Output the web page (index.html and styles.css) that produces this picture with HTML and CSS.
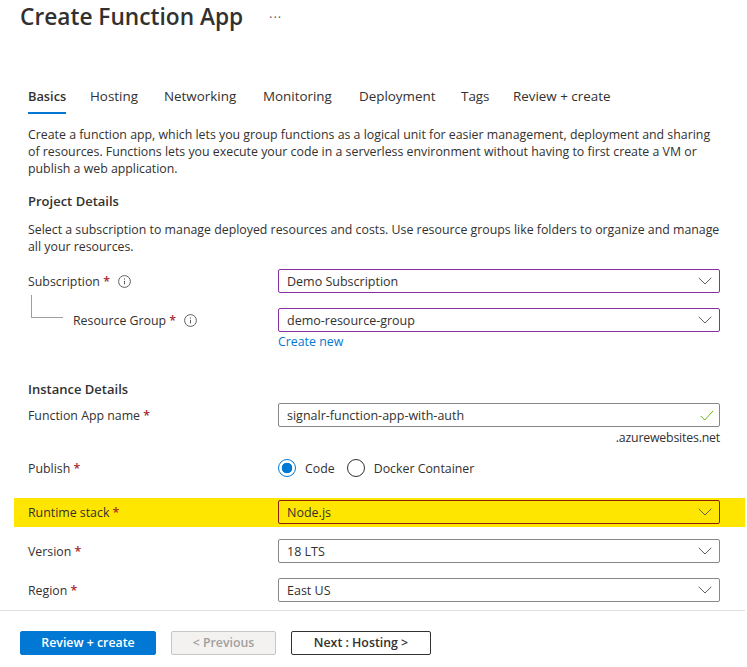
FILE: index.html
```html
<!DOCTYPE html>
<html lang="en">
<head>
    <meta charset="UTF-8">
    <title>Create Function App</title>
    <link rel="stylesheet" href="styles.css">
</head>
<body>
    <header class="page-header">
        <h1>Create Function App</h1>
        <span class="more-dots">&middot;&middot;&middot;</span>
    </header>

    <main class="content">
        <nav class="tabs">
            <a class="tab tab-active">Basics</a>
            <a class="tab tab-hosting">Hosting</a>
            <a class="tab tab-networking">Networking</a>
            <a class="tab tab-monitoring">Monitoring</a>
            <a class="tab tab-deployment">Deployment</a>
            <a class="tab tab-tags">Tags</a>
            <a class="tab">Review + create</a>
        </nav>

        <p class="intro">Create a function app, which lets you group functions as a logical unit for easier management, deployment and sharing of resources. Functions lets you execute your code in a serverless environment without having to first create a VM or publish a web application.</p>

        <h2 class="section-title">Project Details</h2>
        <p class="section-desc">Select a subscription to manage deployed resources and costs. Use resource groups like folders to organize and manage all your resources.</p>

        <div class="row row-subscription">
            <div class="label">
                <span>Subscription <span class="star">*</span></span>
                <svg class="info" viewBox="0 0 13 13"><circle cx="6.5" cy="6.5" r="5.9"/><path d="M6.5 5.8v3.6M6.5 3.4v1.2"/></svg>
            </div>
            <div class="select select-purple">
                <span>Demo Subscription</span>
                <svg class="chevron" viewBox="0 0 14 8"><path d="M.7.8 7 7l6.3-6.2"/></svg>
            </div>
        </div>

        <div class="row row-group">
            <div class="label label-nested">
                <span class="elbow"></span>
                <span>Resource Group <span class="star">*</span></span>
                <svg class="info" viewBox="0 0 13 13"><circle cx="6.5" cy="6.5" r="5.9"/><path d="M6.5 5.8v3.6M6.5 3.4v1.2"/></svg>
            </div>
            <div class="select select-purple">
                <span>demo-resource-group</span>
                <svg class="chevron" viewBox="0 0 14 8"><path d="M.7.8 7 7l6.3-6.2"/></svg>
            </div>
        </div>
        <a class="create-new">Create new</a>

        <h2 class="section-title section-instance">Instance Details</h2>

        <div class="row row-name">
            <div class="label"><span>Function App name <span class="star">*</span></span></div>
            <div class="select">
                <span>signalr-function-app-with-auth</span>
                <svg class="check" viewBox="0 0 14 11"><path d="M.8 6 4.8 10 13.2.8"/></svg>
            </div>
        </div>
        <div class="suffix">.azurewebsites.net</div>

        <div class="row row-publish">
            <div class="label"><span>Publish <span class="star">*</span></span></div>
            <div class="radios">
                <span class="radio radio-on"></span><span class="radio-text">Code</span>
                <span class="radio"></span><span class="radio-text">Docker Container</span>
            </div>
        </div>

        <div class="row row-highlight">
            <div class="label"><span>Runtime stack <span class="star">*</span></span></div>
            <div class="select select-red">
                <span>Node.js</span>
                <svg class="chevron" viewBox="0 0 14 8"><path d="M.7.8 7 7l6.3-6.2"/></svg>
            </div>
        </div>

        <div class="row row-version">
            <div class="label"><span>Version <span class="star">*</span></span></div>
            <div class="select">
                <span>18 LTS</span>
                <svg class="chevron" viewBox="0 0 14 8"><path d="M.7.8 7 7l6.3-6.2"/></svg>
            </div>
        </div>

        <div class="row row-region">
            <div class="label"><span>Region <span class="star">*</span></span></div>
            <div class="select">
                <span>East US</span>
                <svg class="chevron" viewBox="0 0 14 8"><path d="M.7.8 7 7l6.3-6.2"/></svg>
            </div>
        </div>
    </main>

    <footer class="footer">
        <a class="button button-primary">Review + create</a>
        <a class="button button-disabled">&lt; Previous</a>
        <a class="button button-outline">Next : Hosting &gt;</a>
    </footer>
</body>
</html>
```

FILE: styles.css
```css
/* Basic layout */
html, body {
    height: 667px;
    overflow: hidden;
}

body {
    margin: 0;
    background-color: #fff;
    color: #323130;
    font-family: "Open Sans", Arial, sans-serif;
    font-size: 12.35px;
    line-height: 17px;
}

.page-header {
    display: flex;
    align-items: center;
    height: 34px;
    padding-left: 20px;
}

h1 {
    margin: 0;
    width: 249px;
    font-size: 22.7px;
    font-weight: 600;
    line-height: 34px;
    color: #323130;
    white-space: nowrap;
}

.more-dots {
    font-size: 13px;
    letter-spacing: 1px;
    color: #605e5c;
}

.content {
    height: 576px;
    padding: 45px 27px 0 28px;
    box-sizing: border-box;
}

/* Tabs */
.tabs {
    display: flex;
    height: 33px;
    padding-top: 9px;
    box-sizing: border-box;
}

.tab {
    height: 24px;
    font-size: 13.4px;
    white-space: nowrap;
}

.tab-active {
    width: 38px;
    margin-right: 24px;
    font-size: 12.8px;
    font-weight: 600;
    border-bottom: 2px solid #0078d4;
}

.tab-hosting { width: 74px; }
.tab-networking { width: 99px; }
.tab-monitoring { width: 96px; }
.tab-deployment { width: 102px; }
.tab-tags { width: 52px; }

.intro {
    margin: 0;
    padding-top: 14px;
}

.section-title {
    margin: 16px 0 0;
    font-size: 13px;
    font-weight: 600;
    line-height: 17px;
}

.section-desc {
    margin: 11px 0 0;
}

.section-instance {
    margin-top: 31px;
}

/* Form rows */
.row {
    display: flex;
    align-items: center;
}

.row-subscription {
    margin-top: 14px;
}

.row-group {
    margin-top: 15px;
}

.row-name {
    margin-top: 5px;
}

.row-publish {
    margin-top: 10px;
    height: 24px;
}

.row-highlight {
    margin: 18px -25px 0 -14px;
    padding: 2px 25px 3px 14px;
    background-color: #ffe600;
}

.row-version {
    margin-top: 12px;
}

.row-region {
    margin-top: 15px;
}

.label {
    display: flex;
    align-items: center;
    flex: 0 0 250px;
    white-space: nowrap;
}

.label-nested {
    align-self: stretch;
}

.elbow {
    align-self: flex-start;
    width: 31px;
    height: 22px;
    margin: -13px 10px 0 3px;
    border-left: 1px solid #a19f9d;
    border-bottom: 1px solid #a19f9d;
}

.star {
    color: #a4262c;
    font-weight: 600;
}

.info {
    width: 13px;
    height: 13px;
    margin-left: 8px;
    fill: none;
    stroke: #605e5c;
    stroke-width: 1;
}

.select {
    display: flex;
    align-items: center;
    justify-content: space-between;
    flex: 1;
    height: 24px;
    padding: 0 8px;
    box-sizing: border-box;
    background-color: #fff;
    border: 1px solid #8a8886;
    border-radius: 2px;
    font-size: 12.5px;
}

.select-purple {
    border-color: #8a2da5;
}

.select-red {
    background-color: transparent;
    border-color: #8e1f0b;
}

.chevron {
    width: 14px;
    height: 8px;
    margin-right: -1px;
    fill: none;
    stroke: #605e5c;
    stroke-width: 1;
}

.check {
    width: 14px;
    height: 11px;
    margin-right: -3px;
    fill: none;
    stroke: #6bb700;
    stroke-width: 1;
}

.create-new {
    display: block;
    margin: 1px 0 0 250px;
    color: #0078d4;
}

.suffix {
    margin-top: 2px;
    text-align: right;
    letter-spacing: -0.2px;
}

/* Radio buttons */
.radios {
    display: flex;
    align-items: center;
}

.radio {
    width: 18px;
    height: 18px;
    box-sizing: border-box;
    border: 1px solid #323130;
    border-radius: 50%;
}

.radio-on {
    border-color: #0078d4;
    background: radial-gradient(circle, #0078d4 0, #0078d4 5px, #fff 5.6px);
}

.radio-text {
    margin: 0 12px 0 9px;
}

/* Footer */
.footer {
    display: flex;
    gap: 15px;
    height: 57px;
    padding: 20px 0 0 20px;
    margin-right: 2px;
    box-sizing: border-box;
    border-top: 1px solid #e1dfdd;
}

.button {
    height: 24px;
    box-sizing: border-box;
    border-radius: 2px;
    font-weight: 600;
    line-height: 22px;
    text-align: center;
}

.button-primary {
    width: 136px;
    background-color: #0078d4;
    border: 1px solid #0078d4;
    color: #fff;
}

.button-disabled {
    width: 105px;
    background-color: #f3f2f1;
    border: 1px solid #c8c6c4;
    color: #a19f9d;
}

.button-outline {
    width: 140px;
    background-color: #fff;
    border: 1px solid #323130;
    color: #323130;
}
```
